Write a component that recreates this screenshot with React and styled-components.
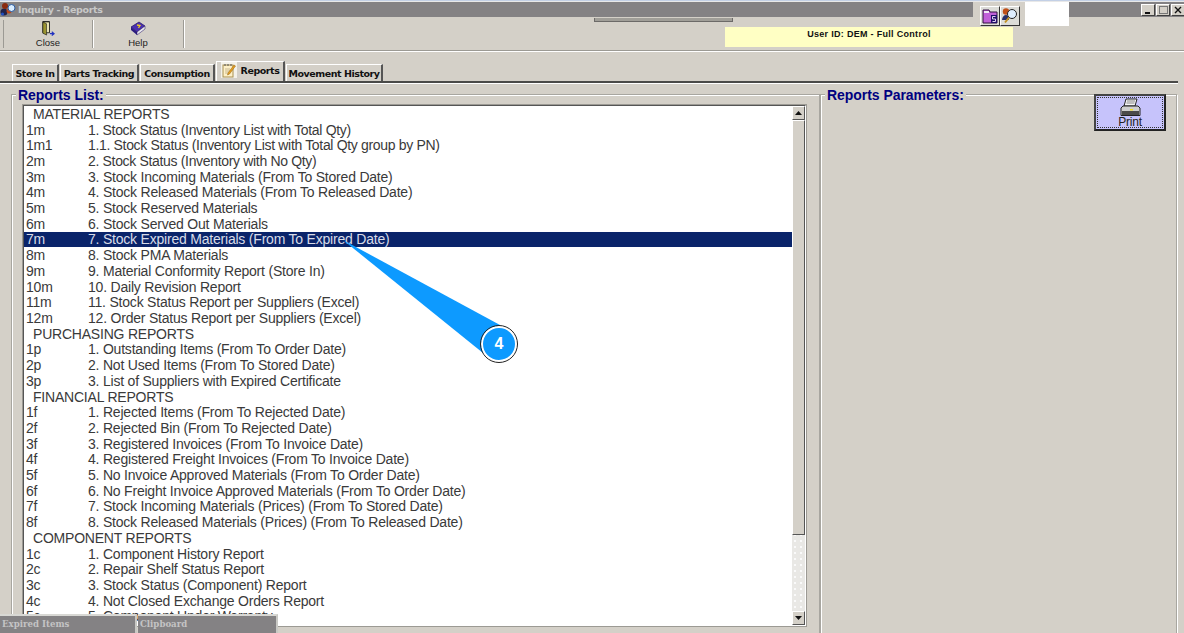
import React from "react";
import styled, { createGlobalStyle } from "styled-components";

const Global = createGlobalStyle`
  html, body { margin: 0; padding: 0; background: #d4d0c8; overflow: hidden; }
  * { box-sizing: border-box; }
`;

const Screen = styled.div`
  position: relative;
  width: 1184px;
  height: 633px;
  overflow: hidden;
  background: #d4d0c8;
  font-family: "Liberation Sans", Arial, sans-serif;
  display: flex;
  flex-direction: column;
`;

const TopEdge = styled.div`
  height: 2px;
  flex: none;
  background: #c3d0e6;
  border-bottom: 1px solid #e8e8e8;
`;

const TitleBar = styled.div`
  height: 15px;
  flex: none;
  background: #848284;
  display: flex;
  align-items: center;
  color: #c8c8c8;
  gap: 2px;
`;

const TitleText = styled.span`
  flex: 1;
  font: bold 9.5px "DejaVu Sans", sans-serif;
  letter-spacing: -0.35px;
`;

const WinButtons = styled.div`
  display: flex;
  gap: 1px;
  margin-right: -1px;
`;

const WinButton = styled.div`
  width: 14px;
  height: 12px;
  background: #d4d0c8;
  border: 1px solid;
  border-color: #fff #404040 #404040 #fff;
  display: flex;
  align-items: center;
  justify-content: center;
`;

const Toolbar = styled.div`
  height: 34px;
  flex: none;
  display: flex;
  align-items: stretch;
  padding: 3px 0 2px 3px;
  border-bottom: 1px solid #9c9a94;
  box-shadow: 0 1px 0 #fff;
`;

const ToolButton = styled.div`
  width: ${(p) => p.$w}px;
  display: flex;
  flex-direction: column;
  align-items: center;
  justify-content: center;
  border-left: ${(p) => (p.$first ? "1px solid #9c9a94" : "none")};
  border-right: 1px solid #9c9a94;
  box-shadow: 1px 0 0 #fff;
  font-size: 9.5px;
  color: #222;
  gap: 1px;
  padding-top: 1px;
`;

const Tabs = styled.div`
  flex: none;
  height: 32px;
  display: flex;
  align-items: flex-end;
  padding-left: 12px;
  border-bottom: 2px solid #4a4a48;
  margin-right: 6px;
  box-shadow: 0 1px 0 #fff;
`;

const Tab = styled.div`
  height: ${(p) => (p.$active ? 20 : 17)}px;
  width: ${(p) => p.$w}px;
  flex: none;
  display: flex;
  align-items: center;
  justify-content: center;
  gap: 4px;
  padding-bottom: ${(p) => (p.$active ? 3 : 0)}px;
  font: bold 9.5px "DejaVu Sans", sans-serif;
  letter-spacing: -0.45px;
  white-space: nowrap;
  color: #111;
  border-top: 1px solid #fff;
  border-left: 1px solid #fff;
  border-right: 2px solid #555;
  margin-right: 1px;
`;

const Body = styled.div`
  flex: 1;
  min-height: 0;
  display: flex;
  padding: 11px 7px 0 11px;
`;

const Group = styled.section`
  position: relative;
  flex: ${(p) => (p.$grow ? "1" : "none")};
  width: ${(p) => (p.$w ? p.$w + "px" : "auto")};
  height: 560px;
  border: 1px solid #a8a6a0;
  box-shadow: inset 1px 1px 0 #fff, 1px 1px 0 #fff;
  padding: 10px 13px 0 11px;
  display: flex;
  align-items: flex-start;
`;

const Legend = styled.h2`
  position: absolute;
  top: -8px;
  left: ${(p) => p.$left}px;
  margin: 0;
  padding: 0 2px;
  background: #d4d0c8;
  color: #000080;
  font: bold 14px/16px "Liberation Sans", sans-serif;
  letter-spacing: -0.05px;
`;

const ListFrame = styled.div`
  flex: 1;
  height: 521px;
  display: flex;
  border: 1px solid;
  border-color: #555 #fff #fff #555;
  outline: 1px solid #9c9a94;
  background: #fff;
`;

const List = styled.div`
  flex: 1;
  overflow: hidden;
  min-width: 0;
`;

const Row = styled.div`
  height: 15.71px;
  display: flex;
  align-items: center;
  font-size: 14px;
  letter-spacing: ${(p) => (p.$tight ? -0.33 : -0.21)}px;
  white-space: nowrap;
  color: ${(p) => (p.$selected ? "#d8dce8" : "#3a3a3a")};
  background: ${(p) => (p.$selected ? "#0a246a" : "transparent")};
  padding-left: ${(p) => (p.$header ? 9 : 2)}px;
`;

const Code = styled.span`
  width: 62px;
  flex: none;
`;

const Scrollbar = styled.div`
  width: 13px;
  flex: none;
  display: flex;
  flex-direction: column;
  background-color: #e9e8e5;
  background-image: radial-gradient(#fafafa 1px, transparent 1.2px);
  background-size: 6px 6px;
`;

const ScrollBtn = styled.div`
  height: 14px;
  flex: none;
  background: #d4d0c8;
  border: 1px solid;
  border-color: #fff #555 #555 #fff;
  display: flex;
  align-items: center;
  justify-content: center;
`;

const Thumb = styled.div`
  height: 415px;
  flex: none;
  background: #d4d0c8;
  border: 1px solid;
  border-color: #fff #555 #555 #fff;
`;

const Spacer = styled.div`
  flex: 1;
`;

const ParamArea = styled.div`
  flex: 1;
  display: flex;
  justify-content: flex-end;
  align-items: flex-start;
  margin: -11px -3px 0 0;
`;

const PrintButton = styled.div`
  width: 72px;
  height: 37px;
  background: #c6c3fb;
  border: 2px solid #333;
  border-color: #444 #222 #222 #444;
  outline: 1px dotted #333;
  outline-offset: -4px;
  display: flex;
  flex-direction: column;
  align-items: center;
  justify-content: flex-start;
  font-size: 12px;
  line-height: 11px;
  letter-spacing: -0.2px;
  color: #222;
  padding-top: 2px;
`;

const ProgressStub = styled.div`
  position: absolute;
  left: 594px;
  top: 18px;
  width: 139px;
  height: 4px;
  background: #a09e98;
  border: 1px solid #6c6a68;
  border-top: none;
`;

const UserBox = styled.div`
  position: absolute;
  left: 725px;
  top: 27px;
  width: 288px;
  height: 20px;
  background: #ffffc4;
  color: #111;
  font: bold 9px/15px "Liberation Sans", sans-serif;
  text-align: center;
  letter-spacing: 0.3px;
`;

const CornerTools = styled.div`
  position: absolute;
  left: 973px;
  top: 2px;
  height: 24px;
  width: 96px;
  background: #d4d0c8;
  display: flex;
  align-items: flex-start;
  padding: 4px 0 0 7px;
`;

const IconTile = styled.div`
  width: 20px;
  height: 20px;
  background: #dcdcd8;
  border: 1px solid;
  border-color: #fff #333 #333 #fff;
  display: flex;
  align-items: center;
  justify-content: center;
`;

const WhiteSlot = styled.div`
  margin: -4px 0 0 auto;
  width: 44px;
  height: 24px;
  background: #fff;
`;

const DockTabs = styled.div`
  position: absolute;
  left: 0;
  top: 614px;
  display: flex;
  gap: 1px;
`;

const DockTab = styled.div`
  width: ${(p) => p.$w}px;
  height: 19px;
  background: #848284;
  border-top: 2px solid #d8d8d4;
  border-right: 2px solid #c8c8c4;
  color: #c4c4c4;
  font: bold 8.6px/16px "DejaVu Serif", serif;
  padding-left: 2px;
`;

const CalloutShape = styled.svg`
  position: absolute;
  left: 340px;
  top: 235px;
`;

const CalloutBadge = styled.div`
  position: absolute;
  left: 481px;
  top: 326px;
  width: 36px;
  height: 36px;
  border-radius: 50%;
  background: #0d9aff;
  border: 2px solid #fff;
  outline: 1px solid #222;
  color: #fff;
  font: bold 16px/32px "Liberation Sans", sans-serif;
  text-align: center;
`;

const rows = [
  ["", "MATERIAL REPORTS"],
  ["1m", "1. Stock Status (Inventory List with Total Qty)"],
  ["1m1", "1.1. Stock Status (Inventory List with Total Qty group by PN)"],
  ["2m", "2. Stock Status (Inventory with No Qty)"],
  ["3m", "3. Stock Incoming Materials (From To Stored Date)"],
  ["4m", "4. Stock Released Materials (From To Released Date)"],
  ["5m", "5. Stock Reserved Materials"],
  ["6m", "6. Stock Served Out Materials"],
  ["7m", "7. Stock Expired Materials (From To Expired Date)"],
  ["8m", "8. Stock PMA Materials"],
  ["9m", "9. Material Conformity Report (Store In)"],
  ["10m", "10. Daily Revision Report"],
  ["11m", "11. Stock Status Report per Suppliers (Excel)"],
  ["12m", "12. Order Status Report per Suppliers (Excel)"],
  ["", "PURCHASING REPORTS"],
  ["1p", "1. Outstanding Items (From To Order Date)"],
  ["2p", "2. Not Used Items (From To Stored Date)"],
  ["3p", "3. List of Suppliers with Expired Certificate"],
  ["", "FINANCIAL REPORTS"],
  ["1f", "1. Rejected Items (From To Rejected Date)"],
  ["2f", "2. Rejected Bin (From To Rejected Date)"],
  ["3f", "3. Registered Invoices (From To Invoice Date)"],
  ["4f", "4. Registered Freight Invoices (From To Invoice Date)"],
  ["5f", "5. No Invoice Approved Materials (From To Order Date)"],
  ["6f", "6. No Freight Invoice Approved Materials (From To Order Date)"],
  ["7f", "7. Stock Incoming Materials (Prices) (From To Stored Date)"],
  ["8f", "8. Stock Released Materials (Prices) (From To Released Date)"],
  ["", "COMPONENT REPORTS"],
  ["1c", "1. Component History Report"],
  ["2c", "2. Repair Shelf Status Report"],
  ["3c", "3. Stock Status (Component) Report"],
  ["4c", "4. Not Closed Exchange Orders Report"],
  ["5c", "5. Component Under Warranty"],
];

const AppIcon = () => (
  <svg width="16" height="15" viewBox="0 0 16 15">
    <circle cx="4" cy="10" r="3.5" fill="#23234a" />
    <circle cx="5" cy="4" r="3" fill="#8a2a10" />
    <circle cx="9" cy="9" r="2.5" fill="#c04818" />
    <circle cx="11.5" cy="6" r="3.5" fill="#d8ecff" stroke="#2a5aa0" />
    <circle cx="2.5" cy="12" r="1.5" fill="#1e50c8" />
  </svg>
);

const DoorIcon = () => (
  <svg width="18" height="16" viewBox="0 0 18 16">
    <path d="M3.5.5h7v12h-7z" fill="#3c3c1c" stroke="#222" />
    <path d="M5 1.5l5 0v10.5h-5z" fill="#f4efc0" />
    <path d="M3.5 1l4 2v12l-4-2z" fill="#9a9430" stroke="#222" strokeWidth=".7" />
    <path d="M11 13.5h4M13 11.5l2.5 2-2.5 2" fill="none" stroke="#2030c0" strokeWidth="1.2" />
  </svg>
);

const BookIcon = () => (
  <svg width="16" height="15" viewBox="0 0 16 15">
    <path d="M1 6l8-5 6 4-8 6z" fill="#4a30b0" stroke="#201060" strokeWidth=".7" />
    <path d="M1 6l6 5v3L1 9z" fill="#2c1c80" />
    <path d="M7 11l8-6v3l-8 6z" fill="#e8e8f0" stroke="#201060" strokeWidth=".5" />
    <path d="M7 4l3 .5-1.5 2.5" fill="none" stroke="#f0d020" strokeWidth="1.3" />
  </svg>
);

const NoteIcon = () => (
  <svg width="16" height="16" viewBox="0 0 16 16">
    <rect x="0" y="0" width="16" height="16" fill="#f4f2ea" />
    <rect x="2" y="3" width="10" height="12" fill="#fdf0c8" stroke="#a89050" />
    <path d="M4 2v2M7 2v2M10 2v2" stroke="#555" />
    <path d="M4 7h5M4 9h5M4 11h4" stroke="#c8b890" />
    <path d="M7 11l6-8 1.5 1-6 8-2 1z" fill="#e8a020" stroke="#906010" strokeWidth=".5" />
  </svg>
);

const FolderIcon = () => (
  <svg width="16" height="16" viewBox="0 0 16 16">
    <path d="M1 2h6l1 2h7v11H1z" fill="#c060d8" stroke="#301040" />
    <path d="M2 3h5v2H2z" fill="#efe8f4" />
    <rect x="9" y="7" width="6" height="8" fill="#200e6a" />
    <path d="M13.5 8.5h-3v2.5h3v2.5h-3" fill="none" stroke="#e0d0f0" />
  </svg>
);

const SearchIcon = () => (
  <svg width="18" height="18" viewBox="0 0 18 18">
    <circle cx="5" cy="4.5" r="3.2" fill="#c05018" />
    <path d="M1 13c0-3 2-5 4-5s3 2 3 5z" fill="#28306a" />
    <circle cx="11" cy="7" r="4.5" fill="#dfeeff" stroke="#222" />
    <path d="M8 10.5l-4 5" stroke="#c09020" strokeWidth="2" />
  </svg>
);

const PrinterIcon = () => (
  <svg width="22" height="19" viewBox="0 0 22 19">
    <path d="M7 1h11l-2 7H5z" fill="#f4f4f4" stroke="#222" />
    <path d="M8 3h8M7.5 5h8" stroke="#888" />
    <path d="M4 8h15l2 2v7.5H2V10z" fill="#cfcfcf" stroke="#222" />
    <rect x="3" y="13" width="17" height="4" fill="#4a4a4a" />
    <rect x="11" y="11" width="3" height="1.5" fill="#f0e020" />
  </svg>
);

const Arrow = ({ up }) => (
  <svg width="7" height="4" viewBox="0 0 7 4">
    <path d={up ? "M3.5 0L7 4H0z" : "M0 0h7L3.5 4z"} fill="#111" />
  </svg>
);

export default function App() {
  return (
    <Screen>
      <Global />
      <TopEdge />
      <TitleBar>
        <AppIcon />
        <TitleText>Inquiry - Reports</TitleText>
        <WinButtons>
          <WinButton>
            <svg width="8" height="8"><path d="M1 7h5" stroke="#111" strokeWidth="2" /></svg>
          </WinButton>
          <WinButton>
            <svg width="9" height="8"><rect x=".5" y=".5" width="8" height="7" fill="none" stroke="#777" /></svg>
          </WinButton>
          <WinButton>
            <svg width="8" height="8"><path d="M1 1l6 6M7 1L1 7" stroke="#111" strokeWidth="1.4" /></svg>
          </WinButton>
        </WinButtons>
      </TitleBar>
      <Toolbar>
        <ToolButton $w={90} $first>
          <DoorIcon />
          <span>Close</span>
        </ToolButton>
        <ToolButton $w={91}>
          <BookIcon />
          <span>Help</span>
        </ToolButton>
      </Toolbar>
      <Tabs>
        <Tab $w={47}>Store In</Tab>
        <Tab $w={79}>Parts Tracking</Tab>
        <Tab $w={75}>Consumption</Tab>
        <Tab $w={69} $active>
          <NoteIcon />
          Reports
        </Tab>
        <Tab $w={97}>Movement History</Tab>
      </Tabs>
      <Body>
        <Group $w={809}>
          <Legend $left={4}>Reports List:</Legend>
          <ListFrame>
            <List>
              {rows.map(([code, label], i) => (
                <Row
                  key={i}
                  $header={!code}
                  $selected={code === "7m"}
                  $tight={label.includes("Inventory")}
                >
                  {code && <Code>{code}</Code>}
                  <span>{label}</span>
                </Row>
              ))}
            </List>
            <Scrollbar>
              <ScrollBtn><Arrow up /></ScrollBtn>
              <Thumb />
              <Spacer />
              <ScrollBtn><Arrow /></ScrollBtn>
            </Scrollbar>
          </ListFrame>
        </Group>
        <Group $grow>
          <Legend $left={4}>Reports Parameters:</Legend>
          <ParamArea>
            <PrintButton>
              <PrinterIcon />
              Print
            </PrintButton>
          </ParamArea>
        </Group>
      </Body>
      <ProgressStub />
      <UserBox>User ID: DEM - Full Control</UserBox>
      <CornerTools>
        <IconTile><FolderIcon /></IconTile>
        <IconTile><SearchIcon /></IconTile>
        <WhiteSlot />
      </CornerTools>
      <CalloutShape width="170" height="130" viewBox="0 0 170 130">
        <path d="M3 5L160 90L143 118z" fill="#0d9aff" />
      </CalloutShape>
      <CalloutBadge>4</CalloutBadge>
      <DockTabs>
        <DockTab $w={137}>Expired Items</DockTab>
        <DockTab $w={140}>Clipboard</DockTab>
      </DockTabs>
    </Screen>
  );
}
